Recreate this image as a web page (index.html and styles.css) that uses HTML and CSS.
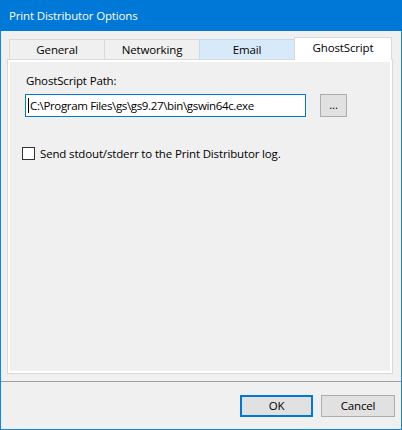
FILE: index.html
```html
<!DOCTYPE html>
<html lang="en">
<head>
  <meta charset="UTF-8" />
  <title>Print Distributor Options</title>
  <link rel="stylesheet" href="styles.css">
</head>
<body>

  <div class="window">
    <div class="titlebar">Print Distributor Options</div>

    <div class="main">
      <div class="tabs">
        <div class="tab">General</div>
        <div class="tab">Networking</div>
        <div class="tab hot">Email</div>
        <div class="tab active">GhostScript</div>
      </div>

      <div class="page">
        <div class="page-inner">
          <div class="label">GhostScript Path:</div>
          <div class="path-row">
            <div class="textbox"><span class="caret"></span>C:\Program Files\gs\gs9.27\bin\gswin64c.exe</div>
            <div class="btn browse">...</div>
          </div>
          <div class="check">
            <span class="box"></span>
            <span>Send stdout/stderr to the Print Distributor log.</span>
          </div>
        </div>
      </div>
    </div>

    <div class="footer">
      <div class="btn default">OK</div>
      <div class="btn">Cancel</div>
    </div>
  </div>

</body>
</html>
```

FILE: styles.css
```css
body {
  margin: 0;
  font-family: 'Open Sans', 'Noto Sans', sans-serif;
  font-size: 11.5px;
  letter-spacing: -0.15px;
  color: #000;
}
.window {
  width: 402px;
  height: 430px;
  box-sizing: border-box;
  padding: 0 1px 1px 1px;
  background: #1883d7;
  display: flex;
  flex-direction: column;
}
.titlebar {
  height: 31px;
  line-height: 31px;
  margin: 0 -1px;
  padding-left: 9px;
  background: #0078d7;
  color: #fff;
}
.main {
  flex: 1;
  background: #f0f0f0;
  padding: 6px 8px 0 6px;
}
.tabs {
  display: flex;
  align-items: flex-end;
  height: 22px;
  margin-left: 2px;
}
.tab {
  width: 96px;
  height: 20px;
  box-sizing: border-box;
  margin-right: -1px;
  border: 1px solid #d9d9d9;
  border-bottom: none;
  background: #f0f0f0;
  text-align: center;
  line-height: 20px;
}
.tab.hot {
  background: #d8eaf9;
  border-color: #c0dcf3;
}
.tab.active {
  width: 98px;
  height: 23px;
  margin-bottom: -1px;
  line-height: 20px;
  background: #fff;
  position: relative;
  z-index: 1;
}
.page {
  height: 315px;
  box-sizing: border-box;
  border: 1px solid #d9d9d9;
  background: #fff;
  padding: 2px;
}
.page-inner {
  height: 100%;
  background: #f0f0f0;
  padding: 11px 0 0 16px;
  box-sizing: border-box;
}
.label {
  line-height: 16px;
}
.path-row {
  display: flex;
  align-items: flex-start;
  margin-top: 5px;
}
.textbox {
  width: 281px;
  height: 23px;
  box-sizing: border-box;
  margin-left: -1px;
  border: 1px solid #0078d7;
  background: #fff;
  padding-left: 2px;
  line-height: 21px;
  letter-spacing: -0.35px;
  white-space: nowrap;
  display: flex;
  align-items: center;
}
.caret {
  width: 1px;
  height: 15px;
  margin-right: 1px;
  background: #000;
}
.btn {
  box-sizing: border-box;
  border: 1px solid #adadad;
  background: #e1e1e1;
  text-align: center;
}
.browse {
  width: 27px;
  height: 23px;
  line-height: 19px;
  margin-left: 14px;
}
.check {
  display: flex;
  align-items: center;
  gap: 5px;
  margin: 29px 0 0 -4px;
}
.box {
  width: 13px;
  height: 13px;
  box-sizing: border-box;
  border: 1px solid #333;
  background: #fff;
}
.footer {
  height: 48px;
  box-sizing: border-box;
  border-top: 1px solid #a0a0a0;
  background: #f0f0f0;
  display: flex;
  justify-content: flex-end;
  align-items: flex-start;
  gap: 8px;
  padding: 13px 6px 0 0;
}
.footer .btn {
  width: 74px;
  height: 22px;
  line-height: 20px;
}
.footer .btn.default {
  width: 73px;
  border: 2px solid #0078d7;
  line-height: 18px;
}
```
